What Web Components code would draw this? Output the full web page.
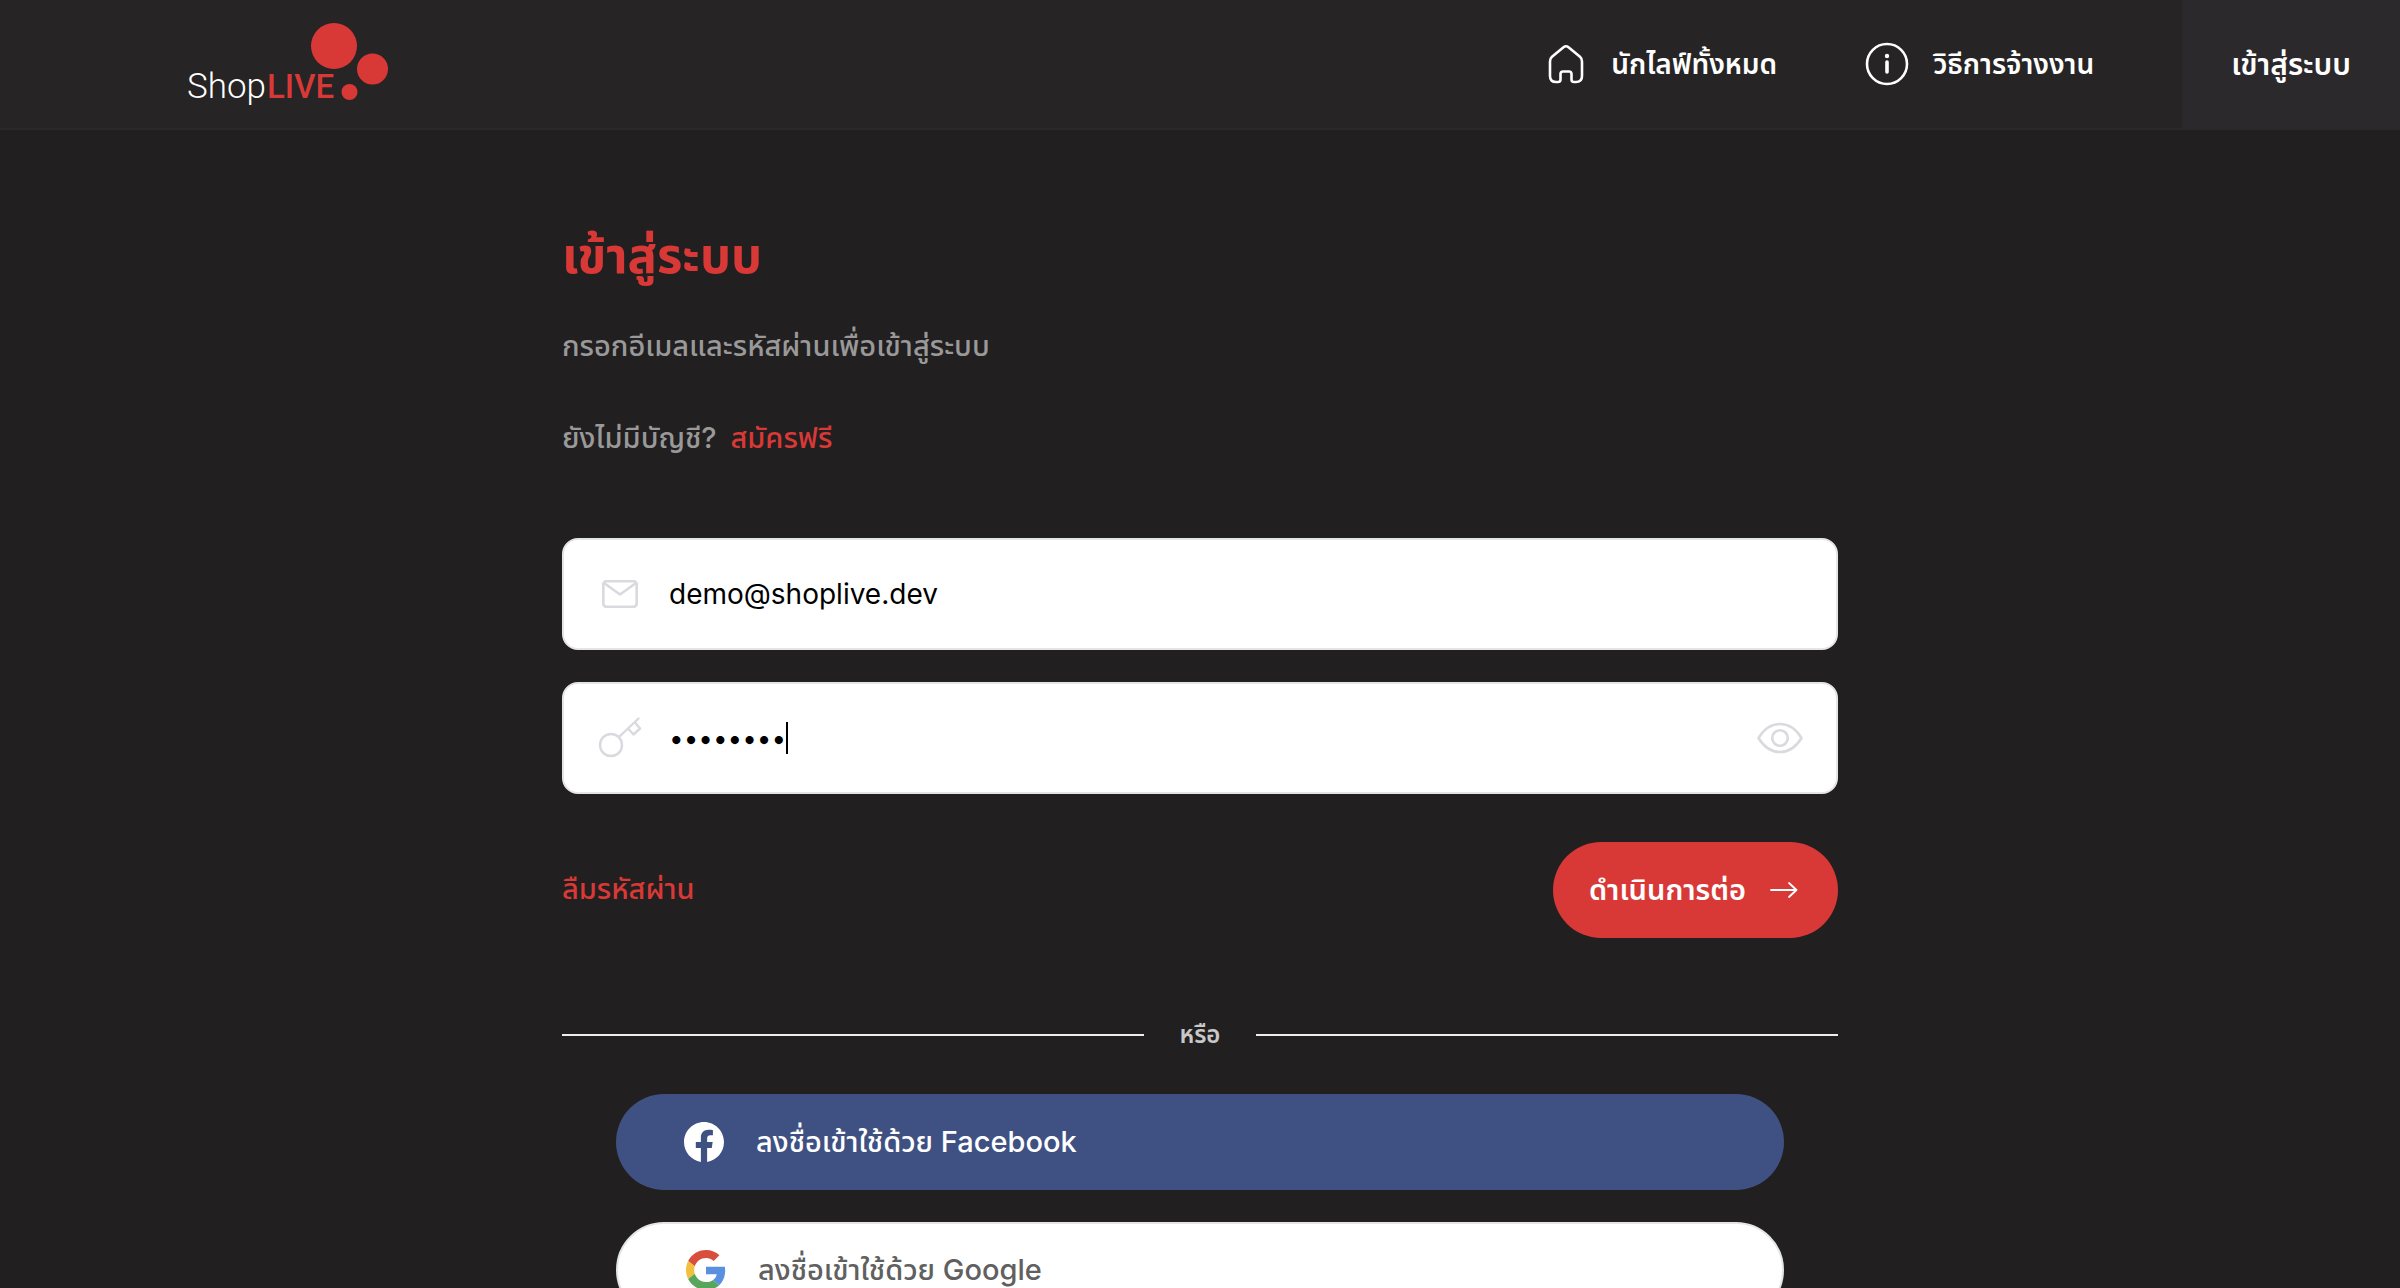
<!DOCTYPE html>
<html lang="th">
<head>
<meta charset="utf-8">
<title>ShopLIVE</title>
<style>
html,body{height:100%}
body{margin:0;overflow:hidden;background:#221f20;color:#fff;font-family:Inter,"Noto Sans Thai","Noto Sans","Liberation Sans",sans-serif;font-size:28px}
</style>
</head>
<body>
<shop-app></shop-app>
<script>
const icons={
home:['40 40','<path d="M3 17.500Q3 14.500 5 12.800L16.500 3.300Q19 1.200 21.500 3.300L33 12.800Q35 14.500 35 17.500V32Q35 38 29 38H27Q24.500 38 24.500 35.500V30Q24.500 27.500 22 27.500H16Q13.500 27.500 13.500 30V35.500Q13.500 38 11 38H9Q3 38 3 32Z" fill="none" stroke="currentColor" stroke-width="2.600" stroke-linejoin="round"/>'],
info:['44 44','<circle cx="22" cy="22" r="20" fill="none" stroke="currentColor" stroke-width="2.600"/><path d="M22 20V30" stroke="currentColor" stroke-width="3.600" stroke-linecap="round"/><circle cx="22" cy="14" r="2.200" fill="currentColor"/>'],
mail:['44 44','<g fill="none" stroke="currentColor" stroke-width="2.600" stroke-linejoin="round"><rect x="5.300" y="9.300" width="33.400" height="25.400" rx="3"/><path d="M6 11L22 22.500L38 11"/></g>'],
key:['44 44','<g fill="none" stroke="currentColor" stroke-width="2.400" stroke-linecap="round" stroke-linejoin="round"><circle cx="13" cy="29" r="11"/><path d="M21 21L40.500 2.500M30.500 13L35.500 18.500L42 12.500L37 6.500"/></g>'],
eye:['46 32','<g fill="none" stroke="currentColor" stroke-width="2.600" stroke-linejoin="round"><path d="M1.500 16Q10 2 23 2T44.500 16Q36 30 23 30T1.500 16Z"/><circle cx="23" cy="16" r="7.800"/></g>'],
arrow:['28 16','<path d="M1 8H26M19 1L26.500 8L19 15" fill="none" stroke="currentColor" stroke-width="1.800" stroke-linecap="round" stroke-linejoin="round"/>'],
facebook:['24 24','<path fill="currentColor" d="M24 12.073C24 5.405 18.627 0 12 0S0 5.405 0 12.073C0 18.100 4.388 23.094 10.125 24V15.563H7.078V12.073H10.125V9.413C10.125 6.387 11.917 4.716 14.658 4.716C15.970 4.716 17.344 4.951 17.344 4.951V7.923H15.831C14.340 7.923 13.875 8.853 13.875 9.808V12.073H17.203L16.671 15.563H13.875V24C19.612 23.094 24 18.100 24 12.073Z"/>'],
google:['48 48','<path fill="#d94f3d" d="M24 9.500c3.540 0 6.710 1.220 9.210 3.600l6.850-6.850C35.900 2.380 30.470 0 24 0 14.620 0 6.510 5.380 2.560 13.220l7.980 6.190C12.430 13.720 17.740 9.500 24 9.500z"/><path fill="#5b8fdf" d="M46.980 24.550c0-1.570-.15-3.090-.38-4.550H24v9.020h12.940c-.58 2.960-2.260 5.480-4.780 7.180l7.730 6c4.510-4.180 7.090-10.360 7.090-17.650z"/><path fill="#f2c03f" d="M10.530 28.590c-.48-1.450-.76-2.990-.76-4.590s.27-3.140.76-4.590l-7.980-6.190C.92 16.460 0 20.120 0 24s.92 7.540 2.560 10.780l7.970-6.190z"/><path fill="#58a65c" d="M24 48c6.480 0 11.930-2.130 15.890-5.810l-7.730-6c-2.150 1.450-4.920 2.300-8.160 2.300-6.260 0-11.570-4.220-13.470-9.910l-7.980 6.190C6.510 42.620 14.620 48 24 48z"/>']
};
const define=(name,html,init)=>customElements.define(name,class extends HTMLElement{
  constructor(){super();this.attachShadow({mode:'open'})}
  connectedCallback(){
    this.shadowRoot.innerHTML=typeof html==='function'?html(this):html;
    if(init)init(this,this.shadowRoot);
  }
});
define('ui-icon',el=>{
  const [box,body]=icons[el.getAttribute('name')],[w,h]=box.split(' ');
  const width=+el.getAttribute('width')||+w;
  return `<style>:host{display:block;flex:none}svg{display:block}</style><svg viewBox="0 0 ${box}" width="${width}" height="${Math.round(width*h/w)}" aria-hidden="true">${body}</svg>`;
});
define('shop-logo',`<style>
:host{display:block}a{display:block}svg{display:block}text{font-family:Roboto,sans-serif;font-size:35px}.live{font-size:33px}
</style><a href="#" aria-label="ShopLIVE"><svg width="204" height="84" viewBox="0 0 204 84">
<circle cx="147" cy="24" r="23" fill="#d93936"/><circle cx="185.500" cy="47" r="15.500" fill="#d93936"/><circle cx="162.500" cy="70" r="8" fill="#d93936"/>
<text x="0" y="76" fill="#fff" font-weight="300">Shop</text><text class="live" x="80" y="76" fill="#d93936" font-weight="500">LIVE</text></svg></a>`);
define('nav-link',`<style>
:host{display:block}a{display:flex;align-items:center;gap:24px;height:100%;color:#fff;text-decoration:none;font-weight:600;line-height:44px;white-space:nowrap}
:host([block]) a{padding:0 49px;background:#2b292b;font-size:30px}
</style><a href="#"><slot name="icon"></slot><span><slot></slot></span></a>`);
define('site-header',`<style>
:host{display:flex;flex:none;height:128px;justify-content:space-between;background:#262425;border-bottom:2px solid #2b292b}
shop-logo{margin:22px 0 0 187px}
nav{display:flex}
nav-link{margin-left:88px}
</style><shop-logo></shop-logo><nav>
<nav-link><ui-icon slot="icon" name="home"></ui-icon>นักไลฟ์ทั้งหมด</nav-link>
<nav-link><ui-icon slot="icon" name="info"></ui-icon>วิธีการจ้างงาน</nav-link>
<nav-link block>เข้าสู่ระบบ</nav-link></nav>`);
define('form-field',el=>`<style>
:host{display:block}
label{display:flex;align-items:center;box-sizing:border-box;height:112px;padding:0 33px 0 34px;background:#fff;border:2px solid #e5e5e9;border-radius:16px;color:#d9d9de}
input{flex:1;min-width:0;margin-left:27px;padding:0;border:0;outline:0;background:none;font:28px/40px Inter,sans-serif;color:#000;height:60px}
:host([focused]) input{flex:none;field-sizing:content;font-size:26px;caret-color:transparent}
.caret{display:none;width:2px;height:32px;background:#000}
:host([focused]) .caret{display:block}
::slotted(*){margin-left:auto}
</style><label><ui-icon name="${el.getAttribute('icon')}"></ui-icon><input type="${el.getAttribute('type')}" value="${el.getAttribute('value')}" aria-label="${el.getAttribute('label')}"><span class="caret"></span><slot></slot></label>`,
(el,root)=>{if(el.hasAttribute('focused'))root.querySelector('input').focus()});
define('icon-button',`<style>:host{display:block}button{display:block;padding:0;border:0;background:none;color:inherit}</style><button type="button" aria-label="แสดงรหัสผ่าน"><slot></slot></button>`);
define('pill-button',`<style>
:host{display:block}
button{display:flex;align-items:center;box-sizing:border-box;width:100%;height:96px;padding:0 40px 0 36px;gap:24px;border:0;border-radius:48px;background:#d93936;color:#fff;font:600 29px/44px Inter,"Noto Sans Thai","Noto Sans",sans-serif;white-space:nowrap}
:host([kind=facebook]) button,:host([kind=google]) button{padding:0 68px;gap:32px;font-weight:500}
:host([kind=facebook]) button{background:#3f5182}
:host([kind=google]) button{background:#fff;border:2px solid #e5e5e9;color:#606060}
</style><button type="button"><slot></slot></button>`);
define('or-divider',`<style>
:host{display:flex;align-items:center;gap:36px;color:#c8c8c8;font-size:24px;line-height:40px;font-weight:600}
:host::before,:host::after{content:"";flex:1;height:2px;background:#eeeef2}
</style><slot></slot>`);
define('login-form',`<style>
:host{display:block;width:1276px;max-width:100%;margin:0 auto;padding-top:92px;font-size:29px}
h1{margin:0;color:#d93936;font-size:49px;line-height:68px;font-weight:700}
p{margin:0;color:#999;line-height:44px;font-weight:500}
.lead{margin-top:34px}.join{margin-top:48px}
a{color:#d93936;text-decoration:none}
.join a{margin-left:6px}
form{display:flex;flex-direction:column;gap:32px;margin-top:78px}
.actions{display:flex;align-items:center;justify-content:space-between;margin-top:16px;font-weight:500}
or-divider{margin:77px 0 39px}
.social{display:flex;flex-direction:column;gap:32px;padding:0 54px 60px}
</style>
<h1>เข้าสู่ระบบ</h1>
<p class="lead">กรอกอีเมลและรหัสผ่านเพื่อเข้าสู่ระบบ</p>
<p class="join">ยังไม่มีบัญชี? <a href="#">สมัครฟรี</a></p>
<form>
<form-field icon="mail" type="email" value="demo@shoplive.dev" label="อีเมล"></form-field>
<form-field icon="key" type="password" value="password" label="รหัสผ่าน" focused><icon-button><ui-icon name="eye"></ui-icon></icon-button></form-field>
<div class="actions"><a href="#">ลืมรหัสผ่าน</a><pill-button>ดำเนินการต่อ<ui-icon name="arrow"></ui-icon></pill-button></div>
</form>
<or-divider>หรือ</or-divider>
<div class="social">
<pill-button kind="facebook"><ui-icon name="facebook" width="40"></ui-icon>ลงชื่อเข้าใช้ด้วย Facebook</pill-button>
<pill-button kind="google"><ui-icon name="google" width="40"></ui-icon>ลงชื่อเข้าใช้ด้วย Google</pill-button>
</div>`);
define('shop-app',`<style>
:host{display:flex;flex-direction:column;height:100%}
main{flex:1;min-height:0;overflow-y:auto;scrollbar-width:none}
</style><site-header></site-header><main><login-form></login-form></main>`);
</script>
</body>
</html>
